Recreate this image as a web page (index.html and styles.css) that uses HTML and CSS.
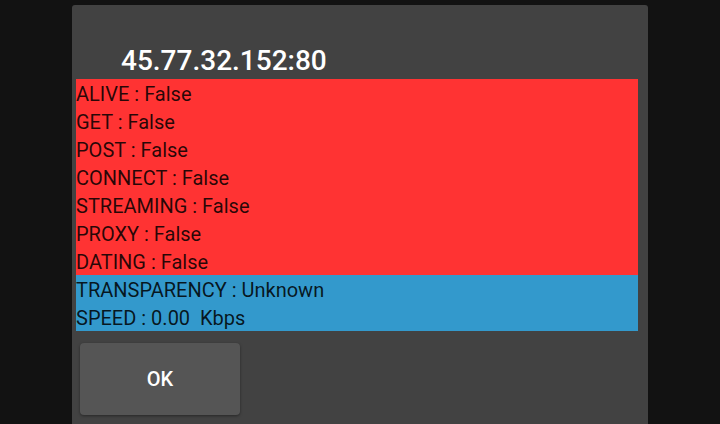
FILE: index.html
```html
<!DOCTYPE html>
<html>
<head>
<meta charset="utf-8">
<link rel="stylesheet" href="styles.css">
</head>
<body>
<div class="dialog">
  <div class="title">45.77.32.152:80</div>
  <div class="results">
    <div class="group red">
      <div class="row">ALIVE : False</div>
      <div class="row">GET : False</div>
      <div class="row">POST : False</div>
      <div class="row">CONNECT : False</div>
      <div class="row">STREAMING : False</div>
      <div class="row">PROXY : False</div>
      <div class="row">DATING : False</div>
    </div>
    <div class="group blue">
      <div class="row">TRANSPARENCY : Unknown</div>
      <div class="row">SPEED : 0.00&nbsp; Kbps</div>
    </div>
  </div>
  <div class="actions">
    <button class="btn">OK</button>
  </div>
</div>
</body>
</html>
```

FILE: styles.css
```css
html, body {
  margin: 0;
  padding: 0;
  background: #121212;
  height: 424px;
  overflow: hidden;
  font-family: Roboto, "Liberation Sans", sans-serif;
}
.dialog {
  margin: 5px 0 0 72px;
  width: 576px;
  height: 430px;
  background: #424242;
  border-radius: 3px 3px 0 0;
  display: flex;
  flex-direction: column;
}
.title {
  height: 74px;
  box-sizing: border-box;
  padding: 40px 0 0 49px;
  color: #fff;
  font-size: 28px;
  font-weight: 500;
  line-height: 32px;
}
.results {
  margin: 0 10px 0 4px;
}
.group.red { background: #ff3333; }
.group.blue { background: #3399cc; }
.row {
  height: 28px;
  line-height: 30px;
  font-size: 20px;
  color: rgba(0, 0, 0, 0.85);
  white-space: pre;
}
.actions {
  padding: 12px 0 0 8px;
}
.btn {
  width: 160px;
  height: 72px;
  border: none;
  border-radius: 4px;
  background: #555555;
  color: #fff;
  font-family: Roboto, "Liberation Sans", sans-serif;
  font-size: 20px;
  font-weight: 500;
  box-shadow: 0 1px 3px rgba(0,0,0,0.4);
}
```
